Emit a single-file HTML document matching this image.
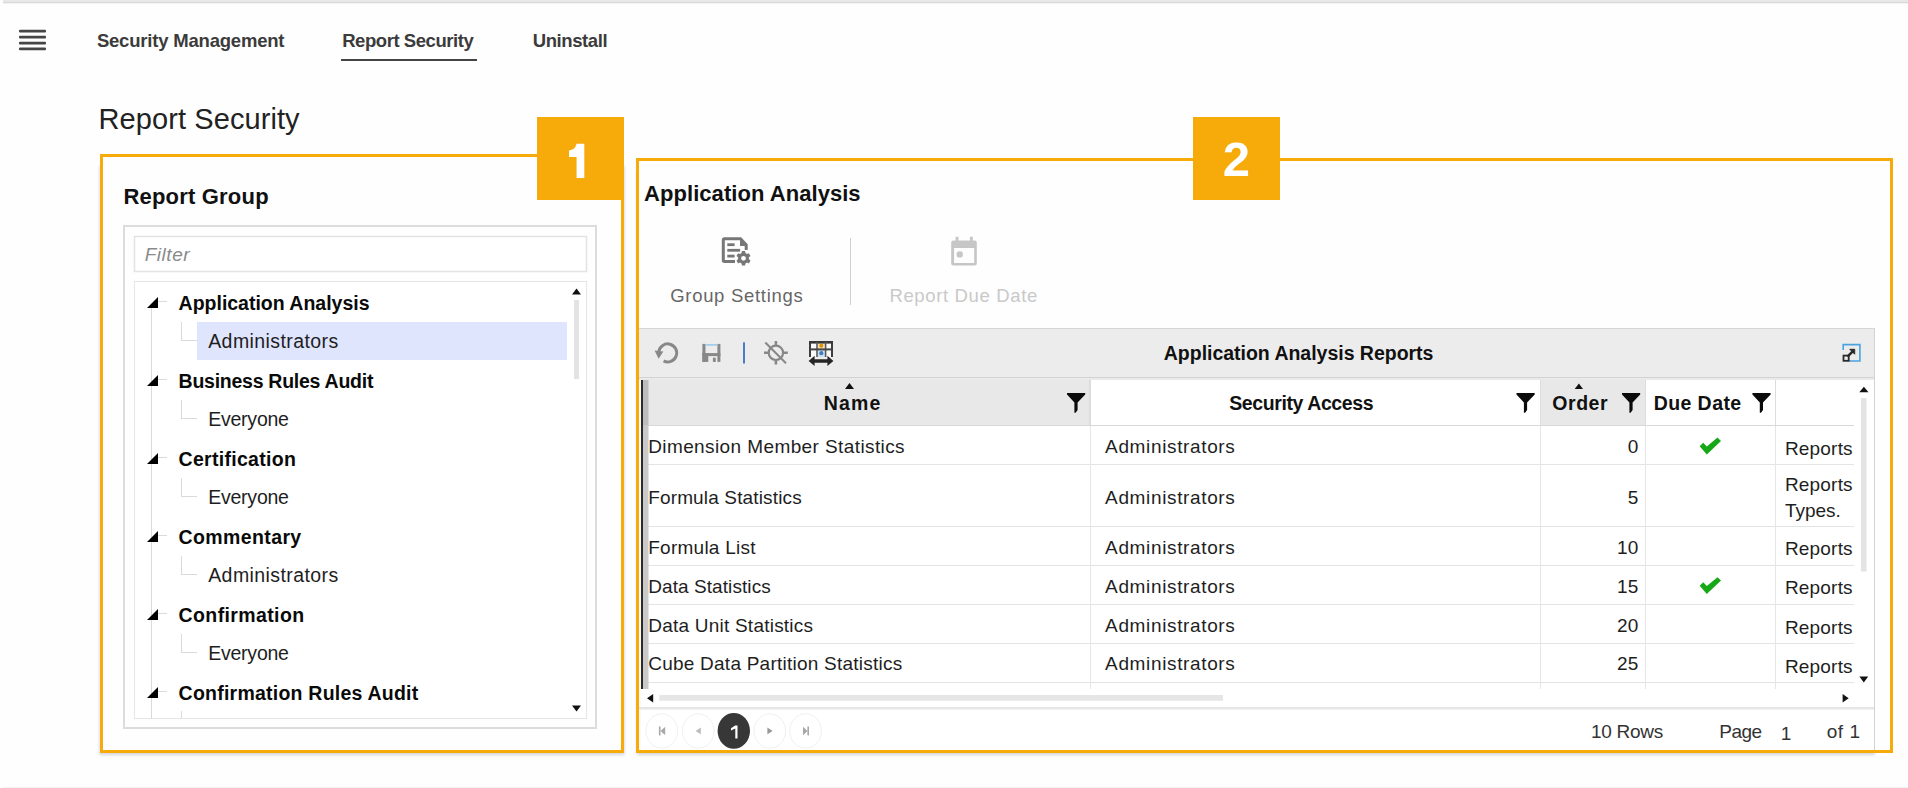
<!DOCTYPE html>
<html><head><meta charset="utf-8"><title>Report Security</title>
<style>
html,body{margin:0;padding:0;}
body{width:1908px;height:788px;position:relative;overflow:hidden;background:#fefefe;font-family:"Liberation Sans", sans-serif;}
.t{position:absolute;white-space:nowrap;}
.a{position:absolute;}
</style></head><body>
<svg class="a" style="left:0;top:0" width="1908" height="788" viewBox="0 0 1908 788">
<defs>
<filter id="sh" x="-5%" y="-5%" width="110%" height="110%"><feGaussianBlur stdDeviation="1.5"/></filter>
</defs>
<!-- top bar -->
<rect x="3" y="0" width="1905" height="2" fill="#e8e8e8"/>
<rect x="3" y="2" width="1905" height="1" fill="#d8d8d8"/>
<rect x="3" y="3" width="1905" height="1" fill="#f3f3f3"/>
<!-- bottom faint line -->
<rect x="3" y="787" width="1905" height="1" fill="#f2f2f2"/>
<!-- hamburger -->
<g fill="#454545">
<rect x="19" y="29.7" width="27" height="2.7" rx="1"/>
<rect x="19" y="35.7" width="27" height="2.7" rx="1"/>
<rect x="19" y="41.7" width="27" height="2.7" rx="1"/>
<rect x="19" y="47.6" width="27" height="2.7" rx="1"/>
</g>
<!-- nav underline -->
<rect x="341" y="59" width="136" height="2" fill="#444"/>

<!-- panel shadows -->
<rect x="99.5" y="166" width="525" height="589" fill="#2a3550" opacity="0.2" filter="url(#sh)"/>
<rect x="102" y="156" width="520" height="595" fill="#fefefe"/>
<rect x="637" y="170" width="1238" height="585" fill="#2a3550" opacity="0.2" filter="url(#sh)"/>
<rect x="638" y="160" width="1253" height="591" fill="#fefefe"/>
<!-- ===== box 1 content ===== -->
<rect x="124" y="226" width="472" height="502" fill="none" stroke="#dcdcdc" stroke-width="2"/>
<rect x="134.5" y="236.5" width="452" height="35" fill="#fff" stroke="#e3e3e3" stroke-width="1.5"/>
<rect x="134.5" y="281.5" width="452" height="437" fill="#fff" stroke="#e6e6e6" stroke-width="1"/>
<!-- selection -->
<rect x="197" y="322" width="370" height="38" fill="#e0e5fe"/>
<!-- tree lines -->
<g fill="#dadada">
<rect x="151" y="308" width="1" height="411"/>
<rect x="158" y="301" width="9" height="1"/>
<rect x="158" y="379" width="9" height="1"/>
<rect x="158" y="457" width="9" height="1"/>
<rect x="158" y="535" width="9" height="1"/>
<rect x="158" y="613" width="9" height="1"/>
<rect x="158" y="691" width="9" height="1"/>
<rect x="181" y="322" width="1" height="18"/><rect x="181" y="340" width="16" height="1"/>
<rect x="181" y="400" width="1" height="18"/><rect x="181" y="418" width="16" height="1"/>
<rect x="181" y="478" width="1" height="18"/><rect x="181" y="496" width="16" height="1"/>
<rect x="181" y="556" width="1" height="18"/><rect x="181" y="574" width="16" height="1"/>
<rect x="181" y="634" width="1" height="18"/><rect x="181" y="652" width="16" height="1"/>
<rect x="181" y="711" width="1" height="7"/>
</g>
<g fill="#000">
<polygon points="158,297 158,308 147,308"/>
<polygon points="158,375 158,386 147,386"/>
<polygon points="158,453 158,464 147,464"/>
<polygon points="158,531 158,542 147,542"/>
<polygon points="158,609 158,620 147,620"/>
<polygon points="158,687 158,698 147,698"/>
</g>
<!-- tree scrollbar -->
<polygon points="576.5,288.5 581,294.5 572,294.5" fill="#111"/>
<rect x="574" y="300" width="5" height="79" fill="#e3e3e3"/>
<polygon points="572,705.5 581,705.5 576.5,711.5" fill="#111"/>

<!-- ===== box 2 content ===== -->
<!-- group settings icon -->
<g fill="none" stroke="#777" stroke-width="3">
<path d="M735 261.5 H724.5 Q723.3 261.5 723.3 260.3 V239.9 Q723.3 238.7 724.5 238.7 H740.5 L746.2 244.8 V250"/>
</g>
<polygon points="740,239 747.5,246 740,246" fill="#777"/>
<g fill="#777">
<rect x="727.3" y="243.3" width="7.3" height="2.8"/>
<rect x="727.3" y="248.9" width="12.8" height="2.8"/>
<rect x="727.3" y="254.7" width="7.3" height="2.8"/>
</g>
<g transform="translate(743.5,258.3)">
<path fill="#777" fill-rule="evenodd" d="M-1.6,-7.2 L1.6,-7.2 L1.9,-5.2 L3.6,-4.3 L5.4,-5.1 L7,-2.3 L5.4,-1 L5.4,1 L7,2.3 L5.4,5.1 L3.6,4.3 L1.9,5.2 L1.6,7.2 L-1.6,7.2 L-1.9,5.2 L-3.6,4.3 L-5.4,5.1 L-7,2.3 L-5.4,1 L-5.4,-1 L-7,-2.3 L-5.4,-5.1 L-3.6,-4.3 L-1.9,-5.2 Z M2.4,0 A2.4,2.4 0 1 0 -2.4,0 A2.4,2.4 0 1 0 2.4,0 Z"/>
</g>
<!-- separator -->
<rect x="850" y="238" width="1" height="67" fill="#cfcfcf"/>
<!-- calendar icon -->
<g fill="#c6c6c6">
<rect x="955.6" y="236.8" width="2.9" height="5"/>
<rect x="969.9" y="236.8" width="2.9" height="5"/>
<path fill-rule="evenodd" d="M953.2,240.4 H974.8 Q976.8,240.4 976.8,242.4 V263.5 Q976.8,265.5 974.8,265.5 H953.2 Q951.2,265.5 951.2,263.5 V242.4 Q951.2,240.4 953.2,240.4 Z M954.1,248 V262.9 H974.2 V248 Z"/>
<circle cx="959.7" cy="254.4" r="3.2"/>
</g>

<!-- grid frame -->
<rect x="639" y="328" width="1236" height="1" fill="#d6d6d6"/>
<rect x="639" y="329" width="1235" height="48" fill="#ececec"/>
<rect x="639" y="377" width="1235" height="1" fill="#d3d3d3"/>
<rect x="639" y="378" width="1235" height="2" fill="#eaeaea"/>
<rect x="1874" y="328" width="1" height="423" fill="#d4d4d4"/>
<rect x="639" y="380" width="1235" height="370" fill="#fff"/>
<rect x="639" y="380" width="2" height="370" fill="#fafafa"/>
<!-- toolbar icons -->
<g fill="none" stroke="#888" stroke-width="3">
<path d="M658.8,351.6 A9,9 0 1 1 663.6,360.9"/>
</g>
<polygon points="654.6,350.6 663.4,351.6 658.6,358.8" fill="#888"/>
<g fill="#888">
<rect x="702.4" y="343.9" width="3.1" height="18"/>
<rect x="717.4" y="343.9" width="3" height="18"/>
<rect x="702.4" y="353.1" width="18" height="3"/>
<rect x="702.4" y="353.1" width="5.9" height="8.8"/>
<rect x="712.9" y="357.7" width="2.9" height="4.2"/>
</g>
<rect x="705.5" y="344" width="12" height="1.8" fill="#a3cdea"/>
<rect x="743" y="342.3" width="2" height="21.2" fill="#4a7cc9"/>
<g stroke="#888" fill="none">
<circle cx="775.9" cy="352.8" r="7.2" stroke-width="2.2"/>
<path d="M775.9,341 V345.6 M775.9,360 V364.6 M764,352.8 H768.7 M783.1,352.8 H787.8" stroke-width="2.6"/>
<path d="M765.3,342.5 L786,363.2" stroke-width="2"/>
</g>
<g>
<rect x="810" y="342" width="22" height="15" fill="#fafafa"/>
<rect x="817.5" y="343" width="7.5" height="6" fill="#f5e2bd"/>
<rect x="817.5" y="350" width="7.5" height="7" fill="#cde0f2"/>
<path d="M810,357 V342 H832 V357" fill="none" stroke="#3d3d3d" stroke-width="2"/>
<rect x="809" y="341" width="24" height="2.6" fill="#383838"/>
<rect x="816.2" y="342" width="1.6" height="15" fill="#5a5a5a"/>
<rect x="824.8" y="342" width="1.6" height="15" fill="#5a5a5a"/>
<rect x="810" y="348.4" width="22" height="2" fill="#444"/>
<circle cx="821.3" cy="345.7" r="2" fill="#e58f00"/>
<circle cx="821.3" cy="353.2" r="2.1" fill="#3f7fc0"/>
<path d="M808.6,361 L814.6,355.8 L814.6,359.2 L827.4,359.2 L827.4,355.8 L833.4,361 L827.4,366 L827.4,362.8 L814.6,362.8 L814.6,366 Z" fill="#262626"/>
</g>
<!-- expand icon -->
<path d="M1843.2,350 V344.6 H1859.9 V361 H1849" fill="none" stroke="#4aa3df" stroke-width="1.6"/>
<rect x="1843.5" y="355.6" width="5.2" height="5.2" fill="#ececec" stroke="#2a2a2a" stroke-width="1.8"/>
<path d="M1847.5,356.6 L1853,351.1" stroke="#2a2a2a" stroke-width="2.4"/>
<polygon points="1849.8,349.3 1854.7,349.3 1854.7,354.2" fill="#2a2a2a" stroke="#2a2a2a" stroke-width="1"/>

<!-- header backgrounds -->
<rect x="643" y="380" width="446" height="45" fill="#e8e8e8"/>
<rect x="1541" y="380" width="104" height="45" fill="#e8e8e8"/>
<g fill="#dcdcdc">
<rect x="1089" y="380" width="2" height="45"/>
<rect x="1540" y="380" width="1" height="45"/>
<rect x="1645" y="380" width="1" height="45"/>
<rect x="1775" y="380" width="1" height="45"/>
</g>
<rect x="643" y="425" width="1211" height="1" fill="#d8d8d8"/>
<!-- row borders -->
<g fill="#e4e4e4">
<rect x="643" y="464" width="1211" height="1"/>
<rect x="643" y="526" width="1211" height="1"/>
<rect x="643" y="565" width="1211" height="1"/>
<rect x="643" y="604" width="1211" height="1"/>
<rect x="643" y="643" width="1211" height="1"/>
<rect x="643" y="682" width="1211" height="1"/>
</g>
<g fill="#e6e6e6">
<rect x="1090" y="426" width="1" height="263"/>
<rect x="1540" y="426" width="1" height="263"/>
<rect x="1645" y="426" width="1" height="263"/>
<rect x="1775" y="426" width="1" height="263"/>
</g>
<!-- row indicator -->
<rect x="641" y="380" width="2" height="309" fill="#2b2b2b"/>
<rect x="643" y="380" width="5.5" height="45" fill="#bdbdbd"/>
<rect x="643" y="425" width="5.5" height="264" fill="#c9c9c9"/>
<!-- sort arrows -->
<polygon points="849.5,383 854,389 845,389" fill="#111"/>
<polygon points="1578.9,383.6 1583,389 1574.7,389" fill="#111"/>
<!-- filter icons -->
<g fill="#0a0a0a">
<path id="fl" d="M1067,393 H1085.2 V394.5 L1077.6,402.5 V410 L1075.6,412.7 L1074.4,412.7 V402.5 L1067,394.5 Z"/>
<use href="#fl" x="449.5"/>
<use href="#fl" x="555"/>
<use href="#fl" x="685.4"/>
</g>
<!-- checkmarks -->
<g fill="#17a817">
<path id="ck" d="M1699.7,446.2 L1703.2,442.7 L1706.8,446.5 L1717.5,437.6 L1721,441 L1706.8,454.4 Z"/>
<use href="#ck" y="139.6"/>
</g>
<!-- vertical scrollbar -->
<polygon points="1863.9,386.8 1868.5,392.3 1859.3,392.3" fill="#111"/>
<rect x="1861" y="398" width="5.5" height="173.5" fill="#e4e4e4"/>
<polygon points="1859.4,676.5 1868.2,676.5 1863.8,682.6" fill="#111"/>
<!-- horizontal scrollbar -->
<polygon points="647,698.2 653.2,694 653.2,702.4" fill="#111"/>
<rect x="659.3" y="695" width="563.7" height="5.8" fill="#e6e6e6"/>
<polygon points="1848.7,698.2 1842.6,694 1842.6,702.4" fill="#111"/>
<!-- pager -->
<rect x="639" y="707" width="1235" height="2.5" fill="#e6e6e6"/>
<g fill="none" stroke="#f0f0f0" stroke-width="1">
<ellipse cx="661.8" cy="731" rx="15.8" ry="17.2"/>
<ellipse cx="698.2" cy="731" rx="15.8" ry="17.2"/>
<ellipse cx="769.8" cy="731" rx="15.8" ry="17.2"/>
<ellipse cx="805.6" cy="731" rx="15.8" ry="17.2"/>
</g>
<ellipse cx="733.8" cy="730.9" rx="16.2" ry="17.9" fill="#373737"/>
<g fill="#a8a8a8">
<rect x="658.9" y="726.5" width="1.6" height="8.9"/>
<polygon points="665.2,726.8 665.2,735.2 660.5,731"/>
<polygon points="700.8,727.5 700.8,734.3 695.6,730.9" fill="#bbb"/>
<polygon points="767.4,727.5 767.4,734.3 772.6,730.9" fill="#999"/>
<polygon points="803,726.8 803,735.2 807.6,731"/>
<rect x="807.4" y="726.5" width="1.6" height="8.9"/>
</g>

<!-- orange annotation boxes -->
<rect x="101.5" y="155.5" width="521" height="596" fill="none" stroke="#F7AB0B" stroke-width="3"/>
<rect x="637.5" y="159.5" width="1254" height="592" fill="none" stroke="#F7AB0B" stroke-width="3"/>
<rect x="537" y="117" width="87" height="83" fill="#F7AB0B"/>
<rect x="1193" y="117" width="87" height="83" fill="#F7AB0B"/>
<path d="M735.2,725.6 H737.5 V738.5 H735.3 V728.6 L731,730.4 V728.2 Z" fill="#fff"/>
<path d="M576.6,143.8 H584.3 V177.9 H576.6 V157 H569 V150.4 Q575,150.2 576.6,143.8 Z" fill="#fff"/>
</svg>

<div class="t" style="left:96.9px;top:32px;font-size:18.5px;line-height:18.5px;font-weight:700;color:#3b3b3b;letter-spacing:-0.2px">Security Management</div>
<div class="t" style="left:342.2px;top:32px;font-size:18.5px;line-height:18.5px;font-weight:700;color:#3b3b3b;letter-spacing:-0.44px">Report Security</div>
<div class="t" style="left:532.7px;top:32px;font-size:18.5px;line-height:18.5px;font-weight:700;color:#3b3b3b;letter-spacing:-0.41px">Uninstall</div>
<div class="t" style="left:98.6px;top:105px;font-size:29px;line-height:29px;color:#222;letter-spacing:0.08px">Report Security</div>
<div class="t" style="left:123.4px;top:186px;font-size:22px;line-height:22px;font-weight:700;color:#111;letter-spacing:0.2px">Report Group</div>
<div class="t" style="left:644.1px;top:183px;font-size:22px;line-height:22px;font-weight:700;color:#111;letter-spacing:0.05px">Application Analysis</div>
<div class="t" style="left:1222.7px;top:135px;font-size:49px;line-height:49px;font-weight:700;color:#fff;letter-spacing:0px">2</div>
<div class="t" style="left:144.7px;top:245px;font-size:19px;line-height:19px;font-style:italic;color:#8a8a8a;letter-spacing:0.54px">Filter</div>
<div class="t" style="left:178.6px;top:294px;font-size:19.5px;line-height:19.5px;font-weight:700;color:#0a0a0a;letter-spacing:-0.01px">Application Analysis</div>
<div class="t" style="left:178.6px;top:372px;font-size:19.5px;line-height:19.5px;font-weight:700;color:#0a0a0a;letter-spacing:-0.26px">Business Rules Audit</div>
<div class="t" style="left:178.6px;top:450px;font-size:19.5px;line-height:19.5px;font-weight:700;color:#0a0a0a;letter-spacing:0.29px">Certification</div>
<div class="t" style="left:178.6px;top:528px;font-size:19.5px;line-height:19.5px;font-weight:700;color:#0a0a0a;letter-spacing:0.38px">Commentary</div>
<div class="t" style="left:178.6px;top:606px;font-size:19.5px;line-height:19.5px;font-weight:700;color:#0a0a0a;letter-spacing:0.38px">Confirmation</div>
<div class="t" style="left:178.6px;top:684px;font-size:19.5px;line-height:19.5px;font-weight:700;color:#0a0a0a;letter-spacing:0.23px">Confirmation Rules Audit</div>
<div class="t" style="left:208.2px;top:332px;font-size:19.5px;line-height:19.5px;color:#1e1e1e;letter-spacing:0.42px">Administrators</div>
<div class="t" style="left:208.2px;top:410px;font-size:19.5px;line-height:19.5px;color:#1e1e1e;letter-spacing:-0.23px">Everyone</div>
<div class="t" style="left:208.2px;top:488px;font-size:19.5px;line-height:19.5px;color:#1e1e1e;letter-spacing:-0.23px">Everyone</div>
<div class="t" style="left:208.2px;top:566px;font-size:19.5px;line-height:19.5px;color:#1e1e1e;letter-spacing:0.42px">Administrators</div>
<div class="t" style="left:208.2px;top:644px;font-size:19.5px;line-height:19.5px;color:#1e1e1e;letter-spacing:-0.23px">Everyone</div>
<div class="t" style="left:670.2px;top:287px;font-size:18.5px;line-height:18.5px;color:#666;letter-spacing:0.7px">Group Settings</div>
<div class="t" style="left:889.4px;top:287px;font-size:18.5px;line-height:18.5px;color:#c9c9c9;letter-spacing:0.65px">Report Due Date</div>
<div class="t" style="left:1163.8px;top:344px;font-size:19.5px;line-height:19.5px;font-weight:700;color:#111;letter-spacing:-0.02px">Application Analysis Reports</div>
<div class="t" style="left:823.7px;top:394px;font-size:19.5px;line-height:19.5px;font-weight:700;color:#111;letter-spacing:1.18px">Name</div>
<div class="t" style="left:1229.2px;top:394px;font-size:19.5px;line-height:19.5px;font-weight:700;color:#111;letter-spacing:-0.4px">Security Access</div>
<div class="t" style="left:1552.3px;top:394px;font-size:19.5px;line-height:19.5px;font-weight:700;color:#111;letter-spacing:0.54px">Order</div>
<div class="t" style="left:1653.7px;top:394px;font-size:19.5px;line-height:19.5px;font-weight:700;color:#111;letter-spacing:0.42px">Due Date</div>
<div class="t" style="left:648.2px;top:437px;font-size:19px;line-height:19px;color:#1e1e1e;letter-spacing:0.4px">Dimension Member Statistics</div>
<div class="t" style="left:1105.1px;top:437px;font-size:19px;line-height:19px;color:#1e1e1e;letter-spacing:0.64px">Administrators</div>
<div class="t" style="right:269.4px;top:437px;font-size:19px;line-height:19px;color:#1e1e1e;letter-spacing:0.3px">0</div>
<div class="t" style="left:648.2px;top:488px;font-size:19px;line-height:19px;color:#1e1e1e;letter-spacing:0.15px">Formula Statistics</div>
<div class="t" style="left:1105.1px;top:488px;font-size:19px;line-height:19px;color:#1e1e1e;letter-spacing:0.64px">Administrators</div>
<div class="t" style="right:269.4px;top:488px;font-size:19px;line-height:19px;color:#1e1e1e;letter-spacing:0.3px">5</div>
<div class="t" style="left:648.2px;top:538px;font-size:19px;line-height:19px;color:#1e1e1e;letter-spacing:0.26px">Formula List</div>
<div class="t" style="left:1105.1px;top:538px;font-size:19px;line-height:19px;color:#1e1e1e;letter-spacing:0.64px">Administrators</div>
<div class="t" style="right:269.4px;top:538px;font-size:19px;line-height:19px;color:#1e1e1e;letter-spacing:0.3px">10</div>
<div class="t" style="left:648.2px;top:577px;font-size:19px;line-height:19px;color:#1e1e1e;letter-spacing:0.08px">Data Statistics</div>
<div class="t" style="left:1105.1px;top:577px;font-size:19px;line-height:19px;color:#1e1e1e;letter-spacing:0.64px">Administrators</div>
<div class="t" style="right:269.4px;top:577px;font-size:19px;line-height:19px;color:#1e1e1e;letter-spacing:0.3px">15</div>
<div class="t" style="left:648.2px;top:616px;font-size:19px;line-height:19px;color:#1e1e1e;letter-spacing:0.23px">Data Unit Statistics</div>
<div class="t" style="left:1105.1px;top:616px;font-size:19px;line-height:19px;color:#1e1e1e;letter-spacing:0.64px">Administrators</div>
<div class="t" style="right:269.4px;top:616px;font-size:19px;line-height:19px;color:#1e1e1e;letter-spacing:0.3px">20</div>
<div class="t" style="left:648.2px;top:654px;font-size:19px;line-height:19px;color:#1e1e1e;letter-spacing:0.24px">Cube Data Partition Statistics</div>
<div class="t" style="left:1105.1px;top:654px;font-size:19px;line-height:19px;color:#1e1e1e;letter-spacing:0.64px">Administrators</div>
<div class="t" style="right:269.4px;top:654px;font-size:19px;line-height:19px;color:#1e1e1e;letter-spacing:0.3px">25</div>
<div class="t" style="left:1784.9px;top:439px;font-size:19px;line-height:19px;color:#1e1e1e;letter-spacing:0.2px">Reports</div>
<div class="t" style="left:1784.9px;top:475px;font-size:19px;line-height:19px;color:#1e1e1e;letter-spacing:0.2px">Reports</div>
<div class="t" style="left:1784.9px;top:539px;font-size:19px;line-height:19px;color:#1e1e1e;letter-spacing:0.2px">Reports</div>
<div class="t" style="left:1784.9px;top:578px;font-size:19px;line-height:19px;color:#1e1e1e;letter-spacing:0.2px">Reports</div>
<div class="t" style="left:1784.9px;top:618px;font-size:19px;line-height:19px;color:#1e1e1e;letter-spacing:0.2px">Reports</div>
<div class="t" style="left:1784.9px;top:657px;font-size:19px;line-height:19px;color:#1e1e1e;letter-spacing:0.2px">Reports</div>
<div class="t" style="left:1784.9px;top:501px;font-size:19px;line-height:19px;color:#1e1e1e;letter-spacing:0px">Types.</div>
<div class="t" style="left:1590.9px;top:722px;font-size:19px;line-height:19px;color:#333;letter-spacing:-0.27px">10 Rows</div>
<div class="t" style="left:1719.3px;top:722px;font-size:19px;line-height:19px;color:#333;letter-spacing:-0.55px">Page</div>
<div class="t" style="left:1780.7px;top:724px;font-size:19px;line-height:19px;color:#333;letter-spacing:0px">1</div>
<div class="t" style="left:1826.7px;top:722px;font-size:19px;line-height:19px;color:#333;letter-spacing:0.54px">of 1</div>
</body></html>
